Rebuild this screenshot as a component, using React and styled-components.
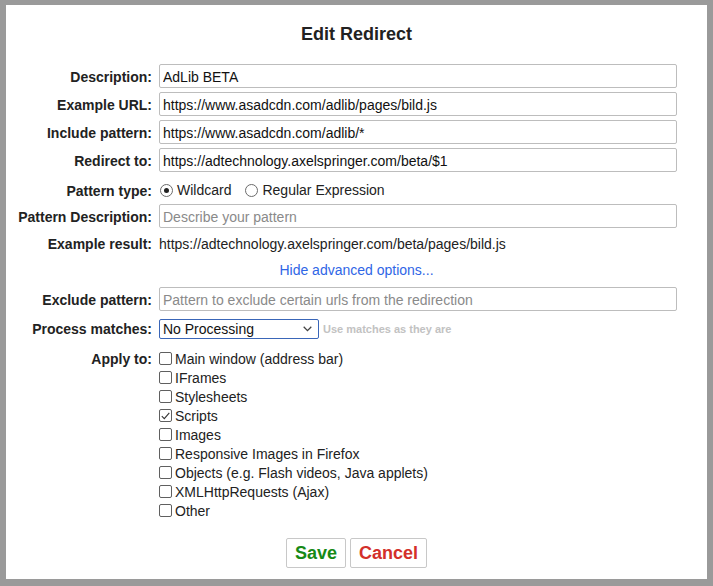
import React from 'react'
import styled, {createGlobalStyle} from 'styled-components'

const GlobalStyle = createGlobalStyle`
    html, body {
        margin: 0;
        padding: 0;
        background: #9a9a9a;
    }

    body {
        font-family: "Liberation Sans", Arial, sans-serif;
        font-size: 14px;
        color: #222;
    }
`

const Backdrop = styled.div`
    width: 713px;
    height: 586px;
    box-sizing: border-box;
    padding: 5px 6px 7px 6px;
    background: #9a9a9a;
`

const Dialog = styled.div`
    width: 701px;
    height: 574px;
    box-sizing: border-box;
    background: #fff;
    padding: 19px 30px 11px 0;
    display: flex;
    flex-direction: column;
`

const Title = styled.h1`
    margin: 0 0 19px 30px;
    height: 21px;
    font-size: 18px;
    font-weight: bold;
    line-height: 21px;
    text-align: center;
    color: #222;
`

const Row = styled.div`
    display: grid;
    grid-template-columns: 146px 1fr;
    column-gap: 7px;
    align-items: ${({$top}) => ($top ? 'start' : 'center')};
    height: ${({$h}) => ($h ? `${$h}px` : 'auto')};
    margin-top: ${({$mt}) => $mt || 0}px;
`

const Label = styled.label`
    font-weight: bold;
    text-align: right;
    white-space: nowrap;
    line-height: ${({$lh}) => $lh || 16}px;
    padding-top: 1px;
`

const Input = styled.input`
    box-sizing: border-box;
    width: 100%;
    height: 24px;
    margin: 0;
    padding: 1px 3px 0 3px;
    border: 1px solid #bdbdbd;
    border-radius: 2px;
    font-family: inherit;
    font-size: 14px;
    color: #111;
    outline: none;

    &::placeholder {
        color: #8a8a8a;
    }
`

const Inline = styled.div`
    display: flex;
    align-items: center;
    white-space: nowrap;
`

const RadioOption = styled.label`
    display: flex;
    align-items: center;
    margin-right: 13px;
`

const RadioDot = styled.span`
    box-sizing: border-box;
    width: 13px;
    height: 13px;
    margin: 0 4px 0 1px;
    border: 1px solid #6b6b6b;
    border-radius: 50%;
    display: flex;
    align-items: center;
    justify-content: center;

    &::after {
        content: '';
        display: ${({$checked}) => ($checked ? 'block' : 'none')};
        width: 5px;
        height: 5px;
        border-radius: 50%;
        background: #222;
    }
`

const ResultText = styled.span`
    color: #222;
    padding-top: 1px;
`

const AdvancedLink = styled.a`
    display: block;
    margin: 4px 0 0 30px;
    height: 24px;
    line-height: 24px;
    text-align: center;
    color: #2f66e6;
    text-decoration: none;
    cursor: pointer;
`

const SelectWrap = styled.div`
    position: relative;
    width: 160px;
    height: 20px;
    margin-right: 4px;
`

const Select = styled.select`
    appearance: none;
    box-sizing: border-box;
    width: 100%;
    height: 20px;
    margin: 0;
    padding: 0 0 0 3px;
    border: 1px solid #3a66b8;
    border-radius: 2px;
    background: #fff;
    font-family: inherit;
    font-size: 14px;
    color: #111;
    outline: none;
`

const Chevron = styled.svg`
    position: absolute;
    right: 7px;
    top: 7px;
    pointer-events: none;
`

const Hint = styled.span`
    font-size: 11px;
    font-weight: bold;
    color: #c2c2c2;
`

const CheckList = styled.div`
    display: flex;
    flex-direction: column;
`

const CheckItem = styled.label`
    display: flex;
    align-items: center;
    height: 19px;
    white-space: nowrap;
`

const Box = styled.span`
    box-sizing: border-box;
    width: 13px;
    height: 13px;
    margin-right: 3px;
    border: 1px solid #5f5f5f;
    border-radius: 2px;
    background: #fff;
    display: flex;
    align-items: center;
    justify-content: center;
`

const Buttons = styled.div`
    display: flex;
    justify-content: center;
    gap: 4px;
    margin: auto 0 0 30px;
`

const Button = styled.button`
    box-sizing: border-box;
    height: 30px;
    padding: 0 8px;
    background: #fff;
    border: 1px solid #c8c8c8;
    border-radius: 2px;
    font-family: inherit;
    font-size: 18px;
    font-weight: bold;
    color: ${({$tone}) => ($tone === 'save' ? '#168a16' : '#d3302a')};
    cursor: pointer;
`

const applyTargets = [
    ['Main window (address bar)', false],
    ['IFrames', false],
    ['Stylesheets', false],
    ['Scripts', true],
    ['Images', false],
    ['Responsive Images in Firefox', false],
    ['Objects (e.g. Flash videos, Java applets)', false],
    ['XMLHttpRequests (Ajax)', false],
    ['Other', false]
]

const Checkbox = ({checked}) =>
    <Box>
        {checked &&
            <svg width="9" height="8" viewBox="0 0 9 8">
                <path d="M0.8 4.2 L3.3 6.6 L8.3 0.8" fill="none" stroke="#333" strokeWidth="1.1" />
            </svg>}
    </Box>

const App = () =>
    <Backdrop>
        <GlobalStyle />
        <Dialog>
            <Title>Edit Redirect</Title>
            <Row $h={24}>
                <Label>Description:</Label>
                <Input defaultValue="AdLib BETA" />
            </Row>
            <Row $h={24} $mt={4}>
                <Label>Example URL:</Label>
                <Input defaultValue="https://www.asadcdn.com/adlib/pages/bild.js" />
            </Row>
            <Row $h={24} $mt={4}>
                <Label>Include pattern:</Label>
                <Input defaultValue="https://www.asadcdn.com/adlib/*" />
            </Row>
            <Row $h={24} $mt={4}>
                <Label>Redirect to:</Label>
                <Input defaultValue="https://adtechnology.axelspringer.com/beta/$1" />
            </Row>
            <Row $h={28} $mt={4}>
                <Label>Pattern type:</Label>
                <Inline>
                    <RadioOption>
                        <RadioDot $checked />
                        Wildcard
                    </RadioOption>
                    <RadioOption>
                        <RadioDot />
                        Regular Expression
                    </RadioOption>
                </Inline>
            </Row>
            <Row $h={24}>
                <Label>Pattern Description:</Label>
                <Input placeholder="Describe your pattern" />
            </Row>
            <Row $h={22} $mt={4}>
                <Label>Example result:</Label>
                <ResultText>https://adtechnology.axelspringer.com/beta/pages/bild.js</ResultText>
            </Row>
            <AdvancedLink>Hide advanced options...</AdvancedLink>
            <Row $h={24} $mt={5}>
                <Label>Exclude pattern:</Label>
                <Input placeholder="Pattern to exclude certain urls from the redirection" />
            </Row>
            <Row $h={27} $mt={4}>
                <Label>Process matches:</Label>
                <Inline>
                    <SelectWrap>
                        <Select defaultValue="none">
                            <option value="none">No Processing</option>
                            <option value="decode">URL decode</option>
                            <option value="encode">URL encode</option>
                            <option value="base64">Base64 decode</option>
                        </Select>
                        <Chevron width="9" height="6" viewBox="0 0 9 6">
                            <path d="M0.7 0.8 L4.5 4.6 L8.3 0.8" fill="none" stroke="#444" strokeWidth="1.3" />
                        </Chevron>
                    </SelectWrap>
                    <Hint>Use matches as they are</Hint>
                </Inline>
            </Row>
            <Row $top $mt={7}>
                <Label $lh={19}>Apply to:</Label>
                <CheckList>
                    {applyTargets.map(([name, checked]) =>
                        <CheckItem key={name}>
                            <Checkbox checked={checked} />
                            {name}
                        </CheckItem>
                    )}
                </CheckList>
            </Row>
            <Buttons>
                <Button $tone="save">Save</Button>
                <Button $tone="cancel">Cancel</Button>
            </Buttons>
        </Dialog>
    </Backdrop>

export default App
